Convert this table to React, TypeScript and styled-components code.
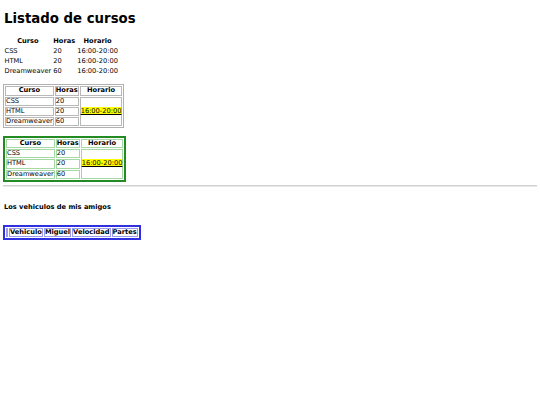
import React from "react";
import styled, { createGlobalStyle } from "styled-components";

const Global = createGlobalStyle`
  html, body { background: #fff; }
  body {
    margin: 4px 3px;
    font-family: "DejaVu Sans", Verdana, sans-serif;
    font-size: 6.67px;
    color: #000;
  }
`;

const Title = styled.h1`
  font-size: 13.3px;
  font-weight: bold;
  margin: 7px 1px 9.5px;
`;

const SubTitle = styled.h4`
  font-size: 6.67px;
  font-weight: bold;
  margin: 16px 1px 14px;
`;

const Rule = styled.hr`
  margin: 3.3px 0;
  border: none;
  border-top: 1px solid #d0d0d0;
  border-bottom: 1px solid #e8e8e8;
  height: 0;
`;

const Gap = styled.div`
  height: 7.8px;
`;

type Variant = "plain" | "gray" | "green" | "blue";

const outer: Record<Variant, string> = {
  plain: "none",
  gray: "1px solid #b0b0b0",
  green: "2px solid #228b22",
  blue: "2px solid #3030e0",
};
const inner: Record<Variant, string> = {
  plain: "none",
  gray: "1px solid #b8b8b8",
  green: "1px solid #a6d8a6",
  blue: "1px solid #9a9aee",
};

const Table = styled.table<{ $v: Variant }>`
  border: ${(p) => outer[p.$v]};
  border-spacing: 1px;
  font-size: 6.67px;
`;

const Th = styled.th<{ $v: Variant }>`
  border: ${(p) => inner[p.$v]};
  padding: ${(p) => (p.$v === "plain" ? "0.5px" : "0")};
  line-height: ${(p) => (p.$v === "plain" ? "normal" : "7.2px")};
  font-weight: bold;
  text-align: center;
`;

const Td = styled.td<{ $v: Variant }>`
  border: ${(p) => inner[p.$v]};
  padding: ${(p) => (p.$v === "plain" ? "0.5px" : "0")};
  line-height: ${(p) => (p.$v === "plain" ? "normal" : "7.2px")};
  text-align: left;
`;

const Mark = styled.span`
  background: #ffff00;
  text-decoration: underline;
`;

const rows = [
  ["CSS", "20"],
  ["HTML", "20"],
  ["Dreamweaver", "60"],
];

function Courses({ v, merged }: { v: Variant; merged: boolean }) {
  return (
    <Table $v={v}>
      <tbody>
        <tr>
          <Th $v={v}>Curso</Th>
          <Th $v={v}>Horas</Th>
          <Th $v={v}>Horario</Th>
        </tr>
        {rows.map((r, i) => (
          <tr key={r[0]}>
            <Td $v={v}>{r[0]}</Td>
            <Td $v={v}>{r[1]}</Td>
            {!merged && <Td $v={v}>16:00-20:00</Td>}
            {merged && i === 0 && (
              <Td $v={v} rowSpan={3}>
                <Mark>16:00-20:00</Mark>
              </Td>
            )}
          </tr>
        ))}
      </tbody>
    </Table>
  );
}

export default function App() {
  return (
    <>
      <Global />
      <Title>Listado de cursos</Title>
      <Courses v="plain" merged={false} />
      <Gap />
      <Courses v="gray" merged />
      <Gap />
      <Courses v="green" merged />
      <Rule />
      <SubTitle>Los vehiculos de mis amigos</SubTitle>
      <Table $v="blue">
        <tbody>
          <tr>
            <Th $v="blue"></Th>
            <Th $v="blue">Vehiculo</Th>
            <Th $v="blue">Miguel</Th>
            <Th $v="blue">Velocidad</Th>
            <Th $v="blue">Partes</Th>
          </tr>
        </tbody>
      </Table>
    </>
  );
}
